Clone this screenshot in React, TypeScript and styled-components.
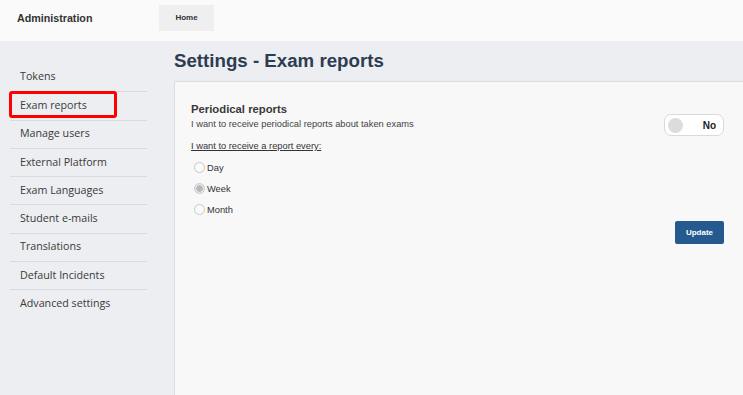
import styled, {createGlobalStyle} from 'styled-components';

const GlobalStyle = createGlobalStyle`
    html, body {
        margin: 0;
        padding: 0;
        background: #eceef1;
        font-family: "Liberation Sans", Arial, sans-serif;
        color: #333;
    }
`;

const menuItems = [
    'Tokens',
    'Exam reports',
    'Manage users',
    'External Platform',
    'Exam Languages',
    'Student e-mails',
    'Translations',
    'Default Incidents',
    'Advanced settings',
];

const periods = [
    {label: 'Day', checked: false},
    {label: 'Week', checked: true},
    {label: 'Month', checked: false},
];

const App = () => {
    return <Root>
        <GlobalStyle/>
        <Header>
            <Brand>Administration</Brand>
            <Tab>Home</Tab>
        </Header>

        <Body>
            <Sidebar>
                {menuItems.map(item => (
                    <MenuItem key={item} isActive={item === 'Exam reports'}>{item}</MenuItem>
                ))}
            </Sidebar>

            <Main>
                <Title>Settings - Exam reports</Title>
                <Panel>
                    <SettingRow>
                        <SettingInfo>
                            <SectionTitle>Periodical reports</SectionTitle>
                            <SectionDesc>I want to receive periodical reports about taken exams</SectionDesc>
                            <PeriodLabel>I want to receive a report every:</PeriodLabel>

                            <RadioList>
                                {periods.map(period => (
                                    <RadioRow key={period.label}>
                                        <Radio isChecked={period.checked}/>
                                        <span>{period.label}</span>
                                    </RadioRow>
                                ))}
                            </RadioList>
                        </SettingInfo>

                        <Toggle>
                            <Knob/>
                            <ToggleText>No</ToggleText>
                        </Toggle>
                    </SettingRow>

                    <Actions>
                        <UpdateButton type="button">Update</UpdateButton>
                    </Actions>
                </Panel>
            </Main>
        </Body>
    </Root>;
};

export default App;




const Root = styled.div`
    display: flex;
    flex-direction: column;
    height: 100vh;
    overflow: hidden;
`;

const Header = styled.div`
    height: 41px;
    flex: 0 0 auto;
    background: #fafafa;
    display: flex;
    align-items: flex-start;
    box-sizing: border-box;
`;

const Brand = styled.div`
    width: 159px;
    padding-left: 17px;
    box-sizing: border-box;
    font-weight: bold;
    font-size: 10.7px;
    line-height: 36px;
    color: #333;
`;

const Tab = styled.div`
    margin-top: 5px;
    width: 55px;
    height: 26px;
    background: #efefef;
    font-size: 8px;
    font-weight: bold;
    color: #333;
    line-height: 25px;
    text-align: center;
`;

const Body = styled.div`
    flex: 1;
    display: flex;
    min-height: 0;
`;

const Sidebar = styled.div`
    width: 174px;
    flex: 0 0 auto;
    padding: 22px 27px 0 10px;
    box-sizing: border-box;
`;

const MenuItem = styled.div<{isActive?: boolean}>`
    position: relative;
    height: 28.3px;
    box-sizing: border-box;
    padding: 0 0 2px 10px;
    display: flex;
    align-items: center;
    font-family: "Open Sans", "Noto Sans", sans-serif;
    font-size: 10.7px;
    color: #3a3a3a;

    & + & {
        border-top: 1px solid #d9dadd;
    }

    ${p => p.isActive && `
        &::after {
            content: '';
            position: absolute;
            left: -1px;
            top: -1px;
            width: 108px;
            height: 27px;
            box-sizing: border-box;
            border: 3px solid #ff0000;
            border-radius: 3px;
        }
    `}
`;

const Main = styled.div`
    flex: 1;
    display: flex;
    flex-direction: column;
    min-width: 0;
`;

const Title = styled.h1`
    margin: 0;
    height: 40px;
    padding-top: 8px;
    box-sizing: border-box;
    font-size: 18.7px;
    font-weight: bold;
    color: #2e3c52;
    line-height: 24px;
`;

const Panel = styled.div`
    flex: 1;
    background: #f8f8f8;
    border-top: 1px solid #dcdcdc;
    border-left: 1px solid #dcdcdc;
    padding: 20px 19px 0 16px;
`;

const SettingRow = styled.div`
    display: flex;
    justify-content: space-between;
    align-items: flex-start;
`;

const SettingInfo = styled.div`
    display: flex;
    flex-direction: column;
`;

const SectionTitle = styled.div`
    font-size: 11.3px;
    font-weight: bold;
    color: #383838;
    line-height: 15px;
`;

const SectionDesc = styled.div`
    font-size: 9.3px;
    color: #444;
    line-height: 14px;
`;

const PeriodLabel = styled.div`
    margin-top: 9px;
    font-size: 9.3px;
    color: #333;
    text-decoration: underline;
    line-height: 13px;
`;

const RadioList = styled.div`
    display: flex;
    flex-direction: column;
    margin-top: 4px;
    padding-left: 3px;
`;

const RadioRow = styled.label`
    display: flex;
    align-items: center;
    height: 21px;
    font-size: 9.3px;
    color: #333;
`;

const Radio = styled.span<{isChecked?: boolean}>`
    width: 11px;
    height: 11px;
    margin-right: 2px;
    box-sizing: border-box;
    border-radius: 50%;
    border: 1px solid #c8c8c8;
    background: ${p => p.isChecked ? 'radial-gradient(circle, #b8b8b8 0 3px, #e8e8e8 3.5px)' : '#fafafa'};
`;

const Toggle = styled.div`
    margin-top: 12px;
    width: 60px;
    height: 22px;
    box-sizing: border-box;
    border: 1px solid #dadada;
    border-radius: 7px;
    background: #fff;
    display: flex;
    align-items: center;
    padding: 0 7px 0 3px;
`;

const Knob = styled.span`
    width: 15px;
    height: 15px;
    border-radius: 50%;
    background: #dcdcdc;
`;

const ToggleText = styled.span`
    margin-left: auto;
    font-size: 10px;
    font-weight: bold;
    color: #222;
`;

const Actions = styled.div`
    display: flex;
    justify-content: flex-end;
    margin-top: 1px;
`;

const UpdateButton = styled.button`
    width: 49px;
    height: 23px;
    border: none;
    border-radius: 2px;
    background: #245a8f;
    color: #fff;
    font-family: "Liberation Sans", Arial, sans-serif;
    font-size: 8px;
    font-weight: bold;
    padding: 0;
`;
